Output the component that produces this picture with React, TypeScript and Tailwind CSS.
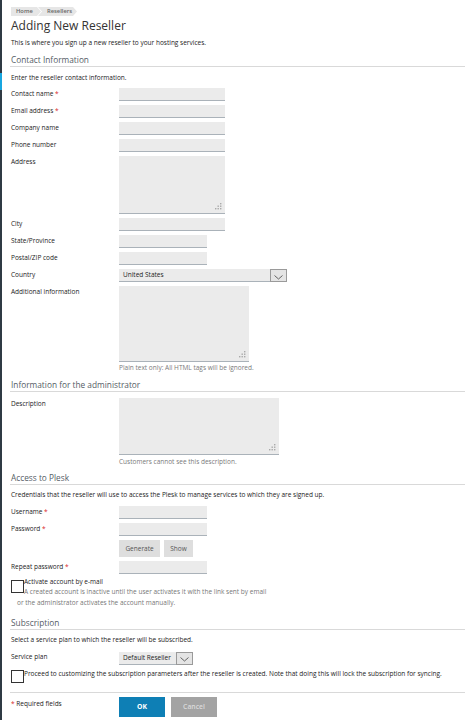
import React from "react";

function Req() {
	return <span className="text-[#d9262b]"> *</span>;
}

function Grip() {
	return (
		<svg className="absolute right-[3px] bottom-[3px]" width="7" height="7" viewBox="0 0 7 7">
			<rect x="5" y="0" width="1.4" height="1.4" fill="#a9a9a9" />
			<rect x="2.5" y="2.5" width="1.4" height="1.4" fill="#a9a9a9" />
			<rect x="5" y="2.5" width="1.4" height="1.4" fill="#a9a9a9" />
			<rect x="0" y="5" width="1.4" height="1.4" fill="#a9a9a9" />
			<rect x="2.5" y="5" width="1.4" height="1.4" fill="#a9a9a9" />
			<rect x="5" y="5" width="1.4" height="1.4" fill="#a9a9a9" />
		</svg>
	);
}

function Chevron() {
	return (
		<svg width="9" height="6" viewBox="0 0 9 6">
			<polyline points="0.5,1.5 4.5,5 8.5,1.5" fill="none" stroke="#555" strokeWidth="0.9" />
		</svg>
	);
}

function Input({ w }: { w: string }) {
	return <div className={`${w} h-[13px] bg-[#ebebeb] border-b border-[#aab2b9]`} />;
}

function Area({ w, h }: { w: string; h: string }) {
	return (
		<div className={`${w} ${h} relative bg-[#ebebeb] border-b border-[#aab2b9]`}>
			<Grip />
		</div>
	);
}

function Select({ w, value }: { w: string; value: string }) {
	return (
		<div className={`${w} h-[13px] flex bg-[#ebebeb] border-b border-[#aab2b9]`}>
			<div className="flex-1 pl-[4px] leading-[12px] text-[#222]">{value}</div>
			<div className="w-[17px] h-[13px] border border-[#9a9a9a] bg-[#e4e4e4] flex items-center justify-center pt-[2px]">
				<Chevron />
			</div>
		</div>
	);
}

function Row({ label, children, mt = "mt-[4px]" }: { label: React.ReactNode; children: React.ReactNode; mt?: string }) {
	return (
		<div className={`flex items-start ${mt}`}>
			<div className="w-[108px] shrink-0 leading-[10px] pt-[0.5px]">{label}</div>
			<div>{children}</div>
		</div>
	);
}

function SectionHeader({ title, mt }: { title: string; mt: string }) {
	return (
		<div className={`${mt} -ml-[1px] pl-[1px] h-[13px] border-b border-[#d9d9d9] text-[8.3px] leading-[12px] text-[#555d66]`}>
			{title}
		</div>
	);
}

export default function App() {
	return (
		<div className="w-[465px] h-[720px] flex bg-white overflow-hidden text-[#222] text-[6.5px]" style={{ fontFamily: '"Open Sans", "Noto Sans", sans-serif' }}>
			{/* left nav edge */}
			<div className="w-[2px] shrink-0 flex flex-col bg-[#2f3a44]">
				<div className="h-[73px]" />
				<div className="h-[17px] bg-[#18a6e0]" />
			</div>

			<div className="flex-1 pl-[9px]">
				{/* breadcrumb */}
				<div className="mt-[7px] flex h-[9px] text-[5.8px] leading-[9px] text-[#666] font-semibold">
					<div className="w-[30px] pl-[5px] bg-[#e6e6e6] [clip-path:polygon(0_0,26px_0,30px_50%,26px_100%,0_100%)]">Home</div>
					<div className="-ml-[3px] w-[39px] pl-[9px] bg-[#e6e6e6] [clip-path:polygon(0_0,35px_0,39px_50%,35px_100%,0_100%,4px_50%)]">Resellers</div>
				</div>

				<h1 className="mt-[2px] text-[12px] leading-[16px] text-[#333]">Adding New Reseller</h1>
				<p className="mt-[4px] leading-[10px]">This is where you sign up a new reseller to your hosting services.</p>

				<SectionHeader title="Contact Information" mt="mt-[6px]" />
				<p className="mt-[6px] leading-[10px]">Enter the reseller contact information.</p>

				<Row label={<>Contact name<Req /></>} mt="mt-[5px]">
					<Input w="w-[106px]" />
				</Row>
				<Row label={<>Email address<Req /></>}>
					<Input w="w-[106px]" />
				</Row>
				<Row label="Company name">
					<Input w="w-[106px]" />
				</Row>
				<Row label="Phone number">
					<Input w="w-[106px]" />
				</Row>
				<Row label="Address">
					<Area w="w-[106px]" h="h-[58px]" />
				</Row>
				<Row label="City">
					<Input w="w-[106px]" />
				</Row>
				<Row label="State/Province">
					<Input w="w-[88px]" />
				</Row>
				<Row label="Postal/ZIP code">
					<Input w="w-[88px]" />
				</Row>
				<Row label="Country">
					<Select w="w-[168px]" value="United States" />
				</Row>
				<Row label="Additional information">
					<Area w="w-[130px]" h="h-[76px]" />
					<div className="mt-[1px] leading-[10px] text-[#7a7a7a]">Plain text only: All HTML tags will be ignored.</div>
				</Row>

				<SectionHeader title="Information for the administrator" mt="mt-[6px]" />
				<Row label="Description" mt="mt-[6px]">
					<Area w="w-[160px]" h="h-[57px]" />
					<div className="mt-[2px] leading-[10px] text-[#7a7a7a]">Customers cannot see this description.</div>
				</Row>

				<SectionHeader title="Access to Plesk" mt="mt-[5px]" />
				<p className="mt-[5px] leading-[10px]">Credentials that the reseller will use to access the Plesk to manage services to which they are signed up.</p>

				<Row label={<>Username<Req /></>} mt="mt-[6px]">
					<Input w="w-[88px]" />
				</Row>
				<Row label={<>Password<Req /></>}>
					<Input w="w-[88px]" />
					<div className="mt-[4px] flex gap-[4px] text-[#555]">
						<div className="h-[17px] w-[41px] bg-[#dedede] flex items-center justify-center">Generate</div>
						<div className="h-[17px] w-[29px] bg-[#dedede] flex items-center justify-center">Show</div>
					</div>
				</Row>
				<Row label={<>Repeat password<Req /></>}>
					<Input w="w-[88px]" />
				</Row>

				<div className="mt-[3px] pl-[6px] leading-[10.3px] w-[258px]">
					<div className="float-left -ml-[6px] mt-[3px] w-[13px] h-[13px] border border-[#333] bg-white" />
					<div className="text-[#222]">Activate account by e-mail</div>
					<div className="text-[#777]">A created account is inactive until the user activates it with the link sent by email or the administrator activates the account manually.</div>
				</div>

				<SectionHeader title="Subscription" mt="mt-[9px]" />
				<p className="mt-[5px] leading-[10px]">Select a service plan to which the reseller will be subscribed.</p>

				<Row label="Service plan" mt="mt-[7px]">
					<Select w="w-[74px]" value="Default Reseller" />
				</Row>

				<div className="mt-[4px] flex items-start leading-[10px]">
					<div className="mt-[1px] w-[13px] h-[13px] shrink-0 border border-[#333] bg-white" />
					<div className="text-[#222]">Proceed to customizing the subscription parameters after the reseller is created. Note that doing this will lock the subscription for syncing.</div>
				</div>

				<div className="mt-[9px] -ml-[1px] h-px bg-[#d9d9d9]" />

				<div className="mt-[4px] flex items-start">
					<div className="w-[108px] pt-[2px] leading-[10px]">
						<span className="text-[#d9262b]">*</span> Required fields
					</div>
					<div className="w-[46px] h-[20px] bg-[#0e7fb5] text-white font-bold flex items-center justify-center text-[6.8px]">OK</div>
					<div className="ml-[6px] w-[46px] h-[20px] bg-[#a3a3a3] text-[#dadada] font-semibold flex items-center justify-center text-[6.8px]">Cancel</div>
				</div>
			</div>
		</div>
	);
}
